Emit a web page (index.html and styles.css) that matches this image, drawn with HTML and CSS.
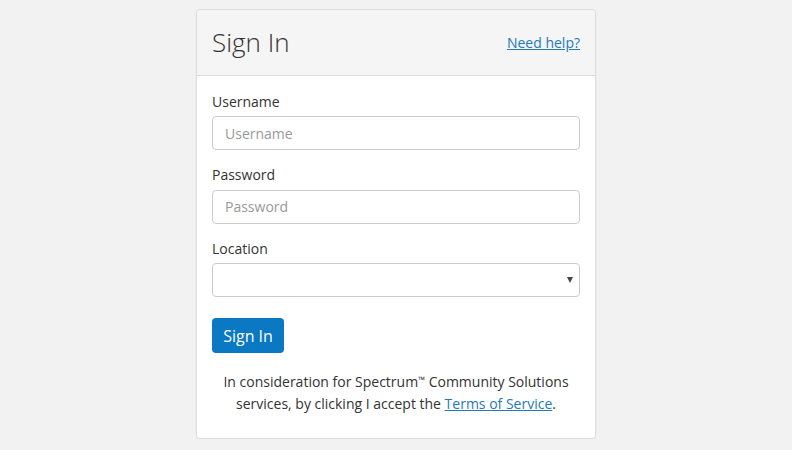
FILE: index.html
```html
<!DOCTYPE html>
<html lang="en">
<head>
<meta charset="utf-8">
<title>Sign In</title>
<link rel="stylesheet" href="styles.css">
</head>
<body>
<div class="card">
  <div class="card-header">
    <h1 class="title">Sign In</h1>
    <a class="link" href="#">Need help?</a>
  </div>
  <form class="card-body">
    <div class="group">
      <label class="label" for="u">Username</label>
      <input class="field" id="u" type="text" placeholder="Username">
    </div>
    <div class="group">
      <label class="label" for="p">Password</label>
      <input class="field" id="p" type="password" placeholder="Password">
    </div>
    <div class="group">
      <label class="label" for="l">Location</label>
      <div class="select-wrap">
        <select class="field select" id="l"><option></option></select>
      </div>
    </div>
    <button class="btn" type="button">Sign In</button>
    <p class="note">In consideration for Spectrum<span class="tm">™</span> Community Solutions services, by clicking I accept the <a class="link" href="#">Terms of Service</a>.</p>
  </form>
</div>
</body>
</html>
```
FILE: styles.css
```css
html, body {
  margin: 0;
  padding: 0;
}
body {
  background: #f2f2f2;
  font-family: "Open Sans", "Liberation Sans", sans-serif;
  color: #333;
  font-size: 14px;
}
.card {
  width: 398px;
  margin: 9px auto 0;
  background: #fff;
  border: 1px solid #dcdcdc;
  border-radius: 4px;
  box-shadow: 0 1px 2px rgba(0,0,0,0.05);
}
.card-header {
  height: 66px;
  box-sizing: border-box;
  padding: 0 15px;
  display: flex;
  align-items: center;
  justify-content: space-between;
  background: #f5f5f5;
  border-bottom: 1px solid #dcdcdc;
  border-radius: 4px 4px 0 0;
}
.title {
  margin: 0;
  font-size: 26px;
  font-weight: 300;
  color: #333;
  line-height: 1;
  padding-bottom: 2px;
}
.link {
  color: #2479b8;
  text-decoration: underline;
  font-size: 14px;
}
.card-body {
  margin: 0;
  padding: 15.5px 15px 22.5px;
}
.group {
  display: flex;
  flex-direction: column;
  gap: 4.5px;
  margin-bottom: 15px;
}
.label {
  line-height: 20px;
  font-size: 14px;
  color: #333;
}
.field {
  box-sizing: border-box;
  width: 100%;
  height: 34px;
  border: 1px solid #ccc;
  border-radius: 4px;
  padding: 0 12px;
  font-family: inherit;
  font-size: 14px;
  color: #555;
  background: #fff;
  outline: none;
}
.field::placeholder {
  color: #999;
}
.select-wrap {
  position: relative;
}
.select {
  appearance: none;
  -webkit-appearance: none;
}
.select-wrap::after {
  content: "";
  position: absolute;
  right: 7px;
  top: 14px;
  width: 0;
  height: 0;
  border-left: 3.5px solid transparent;
  border-right: 3.5px solid transparent;
  border-top: 6px solid #444;
  pointer-events: none;
}
.btn {
  margin-top: 6px;
  height: 35px;
  width: 72px;
  border: 0;
  border-radius: 4px;
  background: #0a78c2;
  color: #fff;
  font-family: inherit;
  font-size: 16px;
  padding: 0;
}
.note {
  margin: 18px 0 0;
  text-align: center;
  line-height: 22px;
  font-size: 14px;
  padding: 0 6px;
}
.tm {
  font-size: 9px;
  line-height: 0;
  vertical-align: 4px;
}
```
